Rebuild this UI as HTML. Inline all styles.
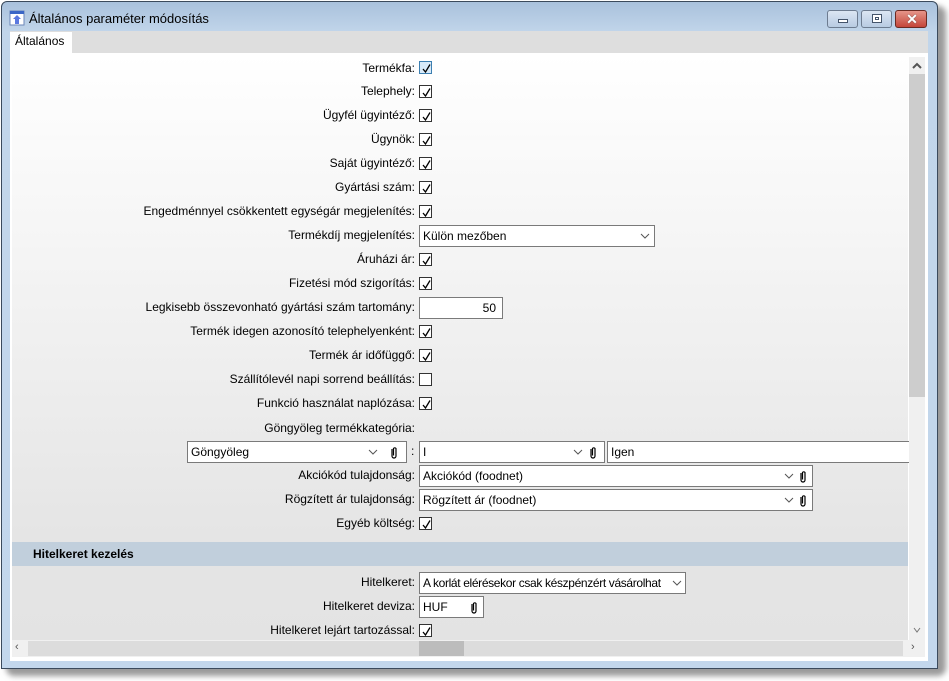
<!DOCTYPE html>
<html><head><meta charset="utf-8"><style>
*{margin:0;padding:0;box-sizing:border-box}
body{width:949px;height:681px;background:#fff;position:relative;overflow:hidden;font-family:"Liberation Sans",sans-serif;font-size:12px;color:#000}
.a{position:absolute}
.lbl{position:absolute;left:0;width:415px;text-align:right;height:16px;line-height:16px;white-space:nowrap}
.cb{position:absolute;left:419px;width:13px;height:13px;border:1px solid #333;background:#fff}
.cb svg{position:absolute;left:1px;top:1px}
.box{position:absolute;height:22px;border:1px solid #7a7a7a;background:#fff;line-height:20px;padding-left:3px;white-space:nowrap;overflow:hidden}
.chev{position:absolute;top:7px}
.clip{position:absolute;top:4px}
</style></head><body>
<div class="a" style="left:6px;top:6px;width:940px;height:670px;background:#9a9a9a;filter:blur(3px);border-radius:8px"></div>
<div class="a" style="left:1px;top:1px;width:937px;height:668px;background:linear-gradient(#a9c1dc 0,#c1d5ea 30px,#c3d7ec 100%);border:1px solid #3b4a5c;border-radius:6px 6px 0 0"></div>
<svg class="a" style="left:9px;top:10px" width="16" height="16"><rect x="1" y="1" width="14" height="14" fill="#fff" stroke="#6b86b8"/><rect x="1" y="1" width="14" height="3" fill="#3a66c6"/><path d="M8 5 L12 9 H10 V14 H6 V9 H4 Z" fill="#5a78e0"/></svg>
<div class="a" style="left:29px;top:11px;font-size:13px;color:#000">Általános paraméter módosítás</div>
<div class="a" style="left:827px;top:10px;width:31px;height:18px;border:1px solid #6d7c90;border-radius:3px;background:linear-gradient(#dbe6f3,#b8cbe2)"><div class="a" style="left:10px;top:8px;width:10px;height:4px;background:#fff;border:1px solid #44546a"></div></div>
<div class="a" style="left:861px;top:10px;width:31px;height:18px;border:1px solid #6d7c90;border-radius:3px;background:linear-gradient(#dbe6f3,#b8cbe2)"><div class="a" style="left:10px;top:3px;width:10px;height:9px;background:#fff;border:1px solid #44546a"><div class="a" style="left:2px;top:2px;width:4px;height:3px;border:1px solid #44546a"></div></div></div>
<div class="a" style="left:895px;top:10px;width:32px;height:18px;border:1px solid #6a2a22;border-radius:3px;background:linear-gradient(#e6958a,#c4463a)"><div class="a" style="left:9px;top:0px;width:14px;color:#fff;font-weight:bold;font-size:14px;line-height:16px;text-align:center;text-shadow:0 0 1px #333">✕</div></div>
<div class="a" style="left:10px;top:31px;width:918px;height:630px;background:#fff"></div>
<div class="a" style="left:10px;top:31px;width:918px;height:22px;background:#dedede"></div>
<div class="a" style="left:10px;top:32px;width:62px;height:22px;background:#fff;padding-left:5px;line-height:19px">Általános</div>
<div class="a" style="left:12px;top:54px;width:896px;height:586px;background:linear-gradient(#fff 0,#f0f0f0 280px,#e5e5e5 480px,#e3e3e3 100%)"></div>
<div class="a" style="left:909px;top:57px;width:16px;height:583px;background:#f0f0f0"></div>
<div class="a" style="left:909px;top:74px;width:16px;height:323px;background:#cdcdcd"></div>
<svg class="a" style="left:912px;top:62px" width="10" height="7"><path d="M1 6 L5 2 L9 6" fill="none" stroke="#555" stroke-width="2"/></svg>
<svg class="a" style="left:912px;top:627px" width="10" height="7"><path d="M2 1 L5 5 L8 1" fill="none" stroke="#777" stroke-width="1"/></svg>
<div class="a" style="left:12px;top:640px;width:913px;height:17px;background:#f0f0f0"></div>
<div class="a" style="left:28px;top:641px;width:875px;height:15px;background:#dcdcdc"></div>
<div class="a" style="left:419px;top:641px;width:45px;height:15px;background:#bcbcbc"></div>
<div class="a" style="left:15px;top:641px;font-size:11px;color:#555">‹</div>
<div class="a" style="left:911px;top:641px;font-size:11px;color:#555">›</div>

<div class="lbl" style="top:60px">Termékfa:</div>
<div class="cb" style="top:61px;border-color:#3c7fb1;background:#d8eaf9"><svg width="11" height="11"><path d="M2 6 L4.5 9 L9 1.5" fill="none" stroke="#000" stroke-width="1.3"/></svg></div>
<div class="lbl" style="top:83px">Telephely:</div>
<div class="cb" style="top:85px"><svg width="11" height="11"><path d="M2 6 L4.5 9 L9 1.5" fill="none" stroke="#000" stroke-width="1.3"/></svg></div>
<div class="lbl" style="top:107px">Ügyfél ügyintéző:</div>
<div class="cb" style="top:109px"><svg width="11" height="11"><path d="M2 6 L4.5 9 L9 1.5" fill="none" stroke="#000" stroke-width="1.3"/></svg></div>
<div class="lbl" style="top:131px">Ügynök:</div>
<div class="cb" style="top:133px"><svg width="11" height="11"><path d="M2 6 L4.5 9 L9 1.5" fill="none" stroke="#000" stroke-width="1.3"/></svg></div>
<div class="lbl" style="top:155px">Saját ügyintéző:</div>
<div class="cb" style="top:157px"><svg width="11" height="11"><path d="M2 6 L4.5 9 L9 1.5" fill="none" stroke="#000" stroke-width="1.3"/></svg></div>
<div class="lbl" style="top:179px">Gyártási szám:</div>
<div class="cb" style="top:181px"><svg width="11" height="11"><path d="M2 6 L4.5 9 L9 1.5" fill="none" stroke="#000" stroke-width="1.3"/></svg></div>
<div class="lbl" style="top:203px">Engedménnyel csökkentett egységár megjelenítés:</div>
<div class="cb" style="top:205px"><svg width="11" height="11"><path d="M2 6 L4.5 9 L9 1.5" fill="none" stroke="#000" stroke-width="1.3"/></svg></div>
<div class="lbl" style="top:227px">Termékdíj megjelenítés:</div>
<div class="box" style="left:419px;top:225px;width:236px">Külön mezőben<svg class="chev" style="left:220px" width="10" height="6"><path d="M1 1 L5 5 L9 1" fill="none" stroke="#555"/></svg></div>
<div class="lbl" style="top:251px">Áruházi ár:</div>
<div class="cb" style="top:253px"><svg width="11" height="11"><path d="M2 6 L4.5 9 L9 1.5" fill="none" stroke="#000" stroke-width="1.3"/></svg></div>
<div class="lbl" style="top:275px">Fizetési mód szigorítás:</div>
<div class="cb" style="top:277px"><svg width="11" height="11"><path d="M2 6 L4.5 9 L9 1.5" fill="none" stroke="#000" stroke-width="1.3"/></svg></div>
<div class="lbl" style="top:299px">Legkisebb összevonható gyártási szám tartomány:</div>
<div class="box" style="left:419px;top:297px;width:84px;text-align:right;padding-right:6px">50</div>
<div class="lbl" style="top:323px">Termék idegen azonosító telephelyenként:</div>
<div class="cb" style="top:325px"><svg width="11" height="11"><path d="M2 6 L4.5 9 L9 1.5" fill="none" stroke="#000" stroke-width="1.3"/></svg></div>
<div class="lbl" style="top:347px">Termék ár időfüggő:</div>
<div class="cb" style="top:349px"><svg width="11" height="11"><path d="M2 6 L4.5 9 L9 1.5" fill="none" stroke="#000" stroke-width="1.3"/></svg></div>
<div class="lbl" style="top:371px">Szállítólevél napi sorrend beállítás:</div>
<div class="cb" style="top:373px"></div>
<div class="lbl" style="top:395px">Funkció használat naplózása:</div>
<div class="cb" style="top:397px"><svg width="11" height="11"><path d="M2 6 L4.5 9 L9 1.5" fill="none" stroke="#000" stroke-width="1.3"/></svg></div>
<div class="lbl" style="top:420px">Göngyöleg termékkategória:</div>

<div class="box" style="left:187px;top:441px;width:220px">Göngyöleg<svg class="chev" style="left:180px" width="10" height="6"><path d="M1 1 L5 5 L9 1" fill="none" stroke="#555"/></svg><svg class="clip" style="left:201px" width="10" height="13"><path d="M3 3 V10 A2 2 0 0 0 7 10 V2.5 A1.5 1.5 0 0 0 4.5 2.5 V9.5" fill="none" stroke="#000" stroke-width="1.2"/></svg></div>
<div class="a" style="left:411px;top:444px">:</div>
<div class="box" style="left:419px;top:441px;width:186px">I<svg class="chev" style="left:153px" width="10" height="6"><path d="M1 1 L5 5 L9 1" fill="none" stroke="#555"/></svg><svg class="clip" style="left:168px" width="10" height="13"><path d="M3 3 V10 A2 2 0 0 0 7 10 V2.5 A1.5 1.5 0 0 0 4.5 2.5 V9.5" fill="none" stroke="#000" stroke-width="1.2"/></svg></div>
<div class="box" style="left:607px;top:441px;width:302px;border-right:none">Igen</div>

<div class="lbl" style="top:467px">Akciókód tulajdonság:</div>
<div class="box" style="left:419px;top:465px;width:394px">Akciókód (foodnet)<svg class="chev" style="left:364px" width="10" height="6"><path d="M1 1 L5 5 L9 1" fill="none" stroke="#555"/></svg><svg class="clip" style="left:378px" width="10" height="13"><path d="M3 3 V10 A2 2 0 0 0 7 10 V2.5 A1.5 1.5 0 0 0 4.5 2.5 V9.5" fill="none" stroke="#000" stroke-width="1.2"/></svg></div>
<div class="lbl" style="top:491px">Rögzített ár tulajdonság:</div>
<div class="box" style="left:419px;top:489px;width:394px">Rögzített ár (foodnet)<svg class="chev" style="left:364px" width="10" height="6"><path d="M1 1 L5 5 L9 1" fill="none" stroke="#555"/></svg><svg class="clip" style="left:378px" width="10" height="13"><path d="M3 3 V10 A2 2 0 0 0 7 10 V2.5 A1.5 1.5 0 0 0 4.5 2.5 V9.5" fill="none" stroke="#000" stroke-width="1.2"/></svg></div>
<div class="lbl" style="top:515px">Egyéb költség:</div>
<div class="cb" style="top:517px"><svg width="11" height="11"><path d="M2 6 L4.5 9 L9 1.5" fill="none" stroke="#000" stroke-width="1.3"/></svg></div>

<div class="a" style="left:12px;top:542px;width:896px;height:24px;background:#c1cfdc;padding-left:21px;line-height:24px;font-weight:bold">Hitelkeret kezelés</div>

<div class="lbl" style="top:574px">Hitelkeret:</div>
<div class="box" style="left:419px;top:572px;width:267px"><span style="letter-spacing:-0.35px">A korlát elérésekor csak készpénzért vásárolhat</span><svg class="chev" style="left:252px;background:#fff" width="10" height="6"><path d="M1 1 L5 5 L9 1" fill="none" stroke="#555"/></svg></div>
<div class="lbl" style="top:598px">Hitelkeret deviza:</div>
<div class="box" style="left:419px;top:596px;width:65px">HUF<svg class="clip" style="left:49px" width="10" height="13"><path d="M3 3 V10 A2 2 0 0 0 7 10 V2.5 A1.5 1.5 0 0 0 4.5 2.5 V9.5" fill="none" stroke="#000" stroke-width="1.2"/></svg></div>
<div class="lbl" style="top:622px">Hitelkeret lejárt tartozással:</div>
<div class="cb" style="top:624px"><svg width="11" height="11"><path d="M2 6 L4.5 9 L9 1.5" fill="none" stroke="#000" stroke-width="1.3"/></svg></div>
</body></html>
